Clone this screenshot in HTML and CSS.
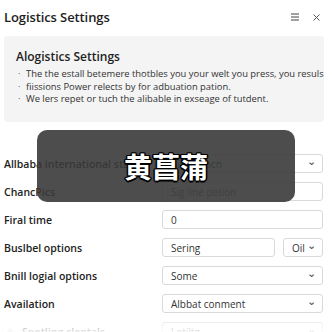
FILE: index.html
```html
<!DOCTYPE html>
<html>
<head>
<meta charset="utf-8">
<link rel="stylesheet" href="styles.css">
</head>
<body>
<div class="page">
  <header class="header">
    <h1 class="title">Logistics Settings</h1>
    <div class="header-icons">
      <svg class="icon" width="10" height="10" viewBox="0 0 10 10"><path d="M1 2h8M1 5h8M1 8h8" stroke="#444" stroke-width="1.1"/></svg>
      <svg class="icon" width="9" height="9" viewBox="0 0 9 9"><path d="M1.5 1.5l6 6M7.5 1.5l-6 6" stroke="#555" stroke-width="1"/></svg>
    </div>
  </header>
  <section class="card">
    <h2 class="card-title">Alogistics Settings</h2>
    <ul class="card-list">
      <li>The the estall betemere thotbles you your welt you press, you resuls</li>
      <li>fiissions Power relects by for adbuation pation.</li>
      <li>We lers repet or tuch the alibable in exseage of tutdent.</li>
    </ul>
  </section>
  <div class="form">
    <div class="row">
      <span class="label">Allbaba international station</span>
      <div class="control select"><span>Ailon stacn</span><span class="chev">&#8964;</span></div>
    </div>
    <div class="row">
      <span class="label">ChancPics</span>
      <div class="control"><span class="ph">Sig line petion</span></div>
    </div>
    <div class="row">
      <span class="label">Firal time</span>
      <div class="control"><span>0</span></div>
    </div>
    <div class="row">
      <span class="label">Buslbel options</span>
      <div class="split">
        <div class="control grow"><span>Sering</span></div>
        <div class="control select small"><span>Oil</span><span class="chev">&#8964;</span></div>
      </div>
    </div>
    <div class="row">
      <span class="label">Bnill logial options</span>
      <div class="control select"><span>Some</span><span class="chev">&#8964;</span></div>
    </div>
    <div class="row">
      <span class="label">Availation</span>
      <div class="control select"><span>Albbat conment</span><span class="chev">&#8964;</span></div>
    </div>
    <div class="row">
      <span class="label"><span class="tri"></span>Spotling clentals</span>
      <div class="control select"><span>Lotiltg</span><span class="chev">&#8964;</span></div>
    </div>
  </div>
  <div class="fade"></div>
  <div class="toast"><span class="toast-text">黄菖蒲</span></div>
</div>
</body>
</html>
```
FILE: styles.css
```css
* { box-sizing: border-box; margin: 0; padding: 0; }
html, body { width: 332px; height: 332px; overflow: hidden; background: #fff; }
body { font-family: "Open Sans", "Noto Sans", sans-serif; color: #222; }
.page { position: relative; width: 332px; height: 332px; overflow: hidden; }
.header { height: 34px; display: flex; align-items: center; justify-content: space-between; padding: 0 11px 0 4px; }
.title { font-size: 13px; font-weight: 600; color: #1e1e1e; letter-spacing: -0.1px; }
.header-icons { display: flex; align-items: center; gap: 12px; }
.icon { display: block; }
.card { margin: 2px 8px 0 4px; background: #f4f4f4; border-radius: 4px; padding: 13px 12px 8px 12px; height: 86px; }
.card-title { font-size: 12px; font-weight: 600; color: #222; line-height: 16px; margin-bottom: 3px; }
.card-list { list-style: none; font-size: 9.4px; line-height: 12.6px; color: #333; }
.card-list li { position: relative; padding-left: 10px; white-space: nowrap; }
.card-list li::before { content: "·"; position: absolute; left: 2px; top: 0; color: #555; }
.form { margin-top: 32px; padding: 0 9px 0 4px; display: flex; flex-direction: column; gap: 9px; }
.row { display: grid; grid-template-columns: 158px 161px; align-items: center; height: 19px; }
.label { font-size: 10.5px; font-weight: 600; color: #222; white-space: nowrap; display: flex; align-items: center; }
.control { height: 19px; border: 1px solid #d9d9d9; border-radius: 3px; background: #fff; display: flex; align-items: center; justify-content: space-between; padding: 0 6px 0 8px; font-size: 10px; color: #333; }
.ph { color: #777; }
.chev { font-size: 11px; line-height: 1; margin-top: -6px; color: #444; }
.split { display: flex; gap: 8px; }
.grow { flex: 1; }
.small { width: 40px; flex: none; }
.tri { width: 0; height: 0; border-left: 6px solid transparent; border-right: 6px solid transparent; border-bottom: 7px solid #ccc; margin-right: 6px; }
.fade { position: absolute; left: 0; right: 0; bottom: 0; height: 18px; background: linear-gradient(to bottom, rgba(255,255,255,0.2), rgba(255,255,255,0.9)); }
.toast { position: absolute; left: 37px; top: 130px; width: 258px; height: 72px; border-radius: 10px; background: rgba(58,58,58,0.9); display: flex; align-items: center; justify-content: center; }
.toast-text { font-family: "Noto Sans CJK SC", sans-serif; font-weight: 700; font-size: 28px; color: #fff; text-shadow: 1.5px 0 0 #000, -1.5px 0 0 #000, 0 1.5px 0 #000, 0 -1.5px 0 #000, 1px 1px 0 #000, -1px -1px 0 #000, 1px -1px 0 #000, -1px 1px 0 #000; }
```
